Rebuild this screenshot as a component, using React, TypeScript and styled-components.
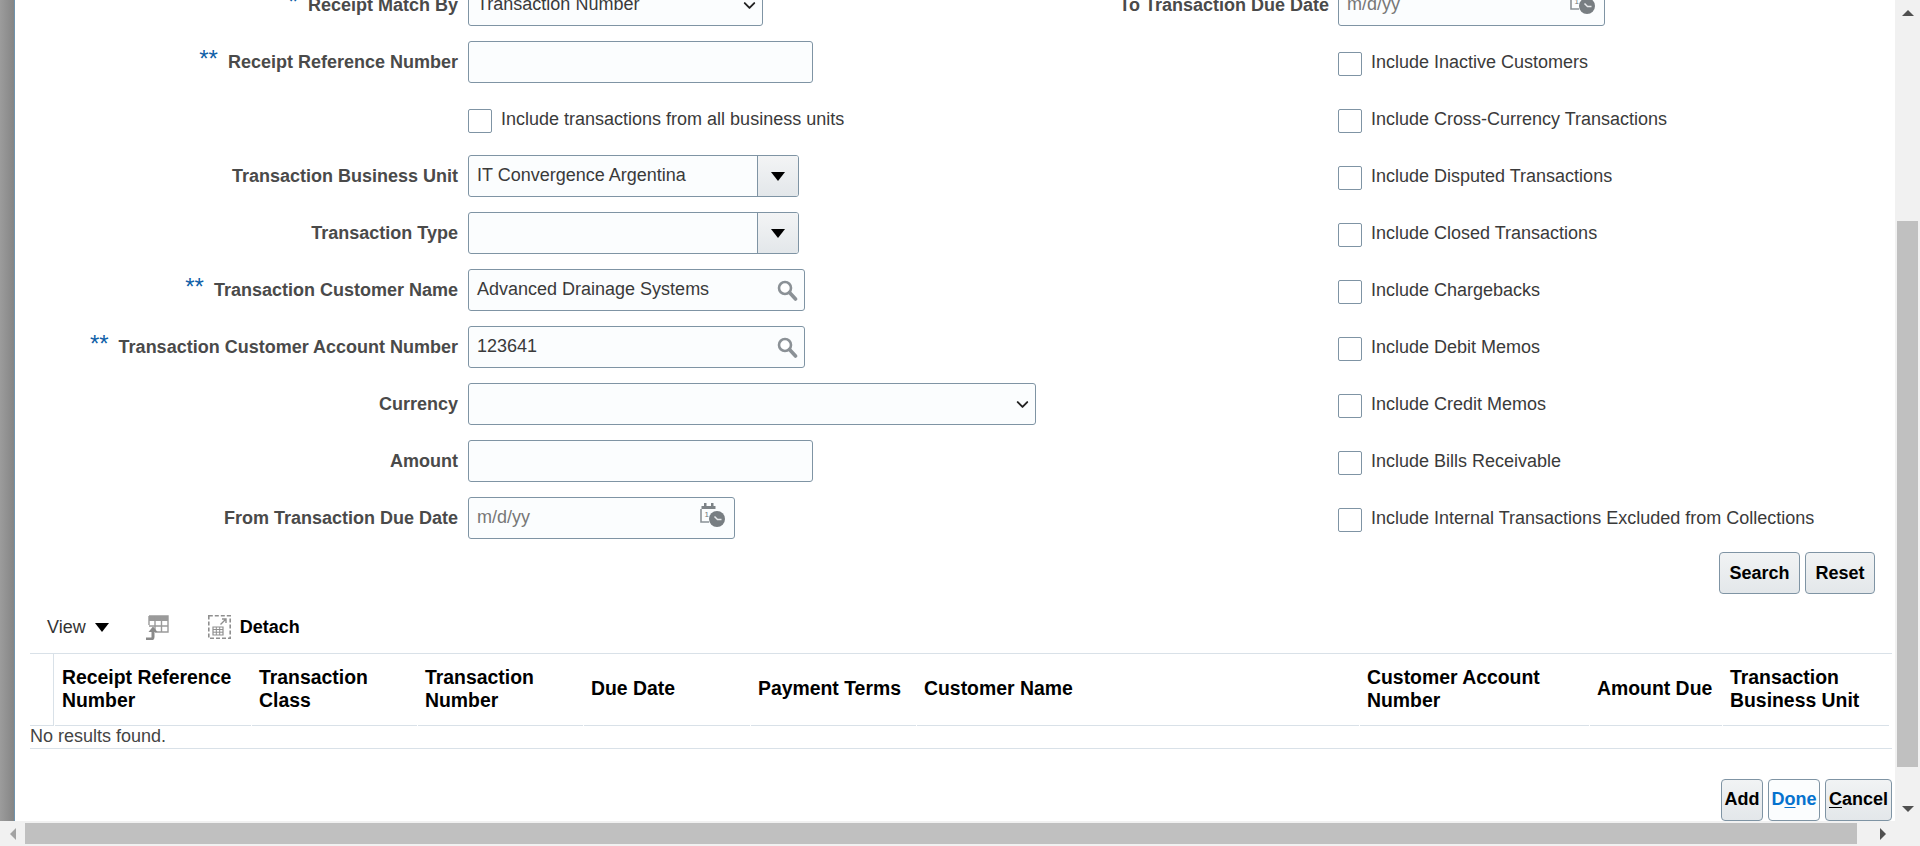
import React from 'react'
import styled, { createGlobalStyle } from 'styled-components'
import { ChevronDown } from 'lucide-react'

const GlobalStyle = createGlobalStyle`
  html, body {
    margin: 0;
    padding: 0;
    background: #fff;
    overflow: hidden;
  }
  * {
    box-sizing: border-box;
  }
`

const Viewport = styled.div`
  width: 1920px;
  height: 846px;
  display: grid;
  grid-template-columns: 1895px 25px;
  grid-template-rows: 821px 25px;
  overflow: hidden;
  font-family: "Liberation Sans", Arial, sans-serif;
  font-size: 18px;
  color: #3a3a3a;
`

const Main = styled.div`
  display: flex;
  overflow: hidden;
`

const SideStrip = styled.div`
  width: 15px;
  flex: none;
  background: linear-gradient(to right, #9c9c9c, #858585);
  border-right: 1px solid #6f93ad;
`

const Dialog = styled.div`
  flex: 1;
  min-width: 0;
  background: #fff;
`

const FormColumns = styled.div`
  display: flex;
  margin-top: -16px;
`

const FormColumn = styled.div<{ $width: number; $labelWidth: number }>`
  width: ${p => p.$width}px;
  flex: none;
  display: grid;
  grid-template-columns: ${p => p.$labelWidth}px 1fr;
  column-gap: ${p => (p.$labelWidth > 300 ? 10 : 9)}px;
  grid-auto-rows: 42px;
  row-gap: 15px;
  align-items: center;
`

const Label = styled.div`
  display: flex;
  justify-content: flex-end;
  align-items: center;
  gap: 10px;
  font-weight: 700;
  color: #4a4a4a;
  white-space: nowrap;
  grid-column: 1;
`

const Required = styled.span`
  color: #0f5fa8;
  font-size: 24px;
  font-weight: 400;
  line-height: 24px;
  margin-top: -6px;
`

const Field = styled.div<{ $width: number }>`
  grid-column: 2;
  width: ${p => p.$width}px;
  height: 42px;
  display: flex;
  align-items: center;
  justify-content: space-between;
  padding: 0 6px 2px 8px;
  background: #fbfdfe;
  border: 1px solid #7f94a4;
  border-radius: 3px;
  white-space: nowrap;
`

const Chevron = styled(ChevronDown)`
  margin: 2px -3px 0 0;
  stroke-width: 2.4;
`

const Placeholder = styled.span`
  color: #777;
`

const ComboBox = styled.div`
  grid-column: 2;
  width: 331px;
  height: 42px;
  display: flex;
  background: #fbfdfe;
  border: 1px solid #7f94a4;
  border-radius: 3px;
`

const ComboValue = styled.div`
  flex: 1;
  display: flex;
  align-items: center;
  padding: 0 0 1px 8px;
  white-space: nowrap;
`

const ComboButton = styled.div`
  width: 41px;
  flex: none;
  display: flex;
  align-items: center;
  justify-content: center;
  border-left: 1px solid #7f94a4;
  border-radius: 0 2px 2px 0;
  background: linear-gradient(to bottom, #f3f4f5, #e3e7ea);
`

const CaretDown = styled.span<{ $size?: number }>`
  display: inline-block;
  width: 0;
  height: 0;
  margin-top: 1px;
  border-left: ${p => p.$size ?? 7}px solid transparent;
  border-right: ${p => p.$size ?? 7}px solid transparent;
  border-top: ${p => (p.$size ?? 7) + 2}px solid #000;
`

const CheckRow = styled.label`
  grid-column: 2;
  display: flex;
  align-items: center;
  gap: 9px;
  white-space: nowrap;
  line-height: 22px;
  height: 24px;
  margin-top: -1px;
`

const CheckBox = styled.span`
  width: 24px;
  height: 24px;
  flex: none;
  margin-top: 4px;
  background: #fff;
  border: 1px solid #7f94a4;
  border-radius: 2px;
`

const SearchBar = styled.div`
  display: flex;
  justify-content: flex-end;
  gap: 5px;
  margin-top: 13px;
  padding-right: 20px;
  button {
    padding-bottom: 0;
  }
`

const Button = styled.button<{ $width: number; $primary?: boolean }>`
  width: ${p => p.$width}px;
  height: 42px;
  padding: 0 0 2px;
  font-family: inherit;
  font-size: 18px;
  font-weight: 700;
  color: ${p => (p.$primary ? '#0572ce' : '#000')};
  background: ${p => (p.$primary ? '#fbfdfe' : 'linear-gradient(to bottom, #f1f3f4, #e3e7ea)')};
  border: 1px solid #7f94a4;
  border-radius: 4px;
  white-space: nowrap;
  u {
    text-underline-offset: 2px;
  }
`

const Toolbar = styled.div`
  height: 59px;
  display: flex;
  align-items: center;
  padding: 7px 0 0 32px;
  color: #333;
`

const ViewMenu = styled.div`
  display: flex;
  align-items: center;
  gap: 9px;
  margin-right: 36px;
`

const ToolIcon = styled.svg`
  display: block;
  flex: none;
`

const LookupIcon = styled(ToolIcon)`
  margin-top: 2px;
`

const DateIcon = styled(ToolIcon)`
  margin: -6px 3px 0 0;
`

const DetachButton = styled.div`
  display: flex;
  align-items: center;
  gap: 9px;
  margin-left: 39px;
  font-weight: 700;
  color: #000;
`

const TableFrame = styled.div`
  margin: 0 3px 0 15px;
  border-top: 1px solid #d9e1e8;
  border-bottom: 1px solid #d9e1e8;
`

const HeaderRow = styled.div`
  display: grid;
  grid-template-columns: 24px 197px 166px 166px 167px 166px 443px 230px 133px 167px;
  height: 72px;
`

const Corner = styled.div`
  border-right: 1px solid #d9e1e8;
  border-bottom: 1px solid #d9e1e8;
`

const HeaderCell = styled.div`
  display: flex;
  align-items: center;
  padding: 0 0 2px 7px;
  font-size: 19.4px;
  line-height: 23px;
  font-weight: 700;
  color: #000;
  border-bottom: 1px solid #d9e1e8;
  margin-left: 1px;
`

const EmptyRow = styled.div`
  height: 22px;
  line-height: 20px;
  color: #444;
`

const Footer = styled.div`
  display: flex;
  justify-content: flex-end;
  gap: 5px;
  margin-top: 30px;
  padding-right: 3px;
`

const VerticalBar = styled.div`
  background: #f1f1f1;
  display: flex;
  flex-direction: column;
  align-items: center;
`

const ArrowSlot = styled.div`
  height: 25px;
  width: 25px;
  flex: none;
  display: flex;
  align-items: center;
  justify-content: center;
`

const ArrowUp = styled.span`
  width: 0;
  height: 0;
  border-left: 6px solid transparent;
  border-right: 6px solid transparent;
  border-bottom: 6px solid #505050;
`

const ArrowDown = styled.span`
  width: 0;
  height: 0;
  border-left: 6px solid transparent;
  border-right: 6px solid transparent;
  border-top: 6px solid #505050;
`

const ArrowLeft = styled.span`
  width: 0;
  height: 0;
  border-top: 6px solid transparent;
  border-bottom: 6px solid transparent;
  border-right: 6px solid #a3a3a3;
`

const ArrowRight = styled.span`
  width: 0;
  height: 0;
  border-top: 6px solid transparent;
  border-bottom: 6px solid transparent;
  border-left: 6px solid #505050;
`

const VerticalThumb = styled.div`
  width: 21px;
  height: 546px;
  margin-top: 196px;
  margin-bottom: 29px;
  background: #c0c0c0;
`

const HorizontalBar = styled.div`
  background: #f1f1f1;
  display: flex;
  align-items: center;
`

const HorizontalThumb = styled.div`
  width: 1832px;
  height: 21px;
  background: #c0c0c0;
  margin-right: 13px;
`

const ScrollCorner = styled.div`
  background: #f1f1f1;
`

const SearchIcon = () => (
  <LookupIcon width="21" height="21" viewBox="0 0 21 21">
    <circle cx="8" cy="8" r="6" fill="#fff" stroke="#8b9196" strokeWidth="2.6" />
    <path d="M12.5 12.5 L18.5 19" stroke="#8b9196" strokeWidth="3.6" strokeLinecap="round" />
  </LookupIcon>
)

const CalendarIcon = () => (
  <DateIcon width="25" height="25" viewBox="0 0 25 25">
    <path d="M1.5 4h14v3h-14z" fill="#7d8387" />
    <path d="M4 1h2.5v4H4zM11 1h2.5v4H11z" fill="#7d8387" />
    <path d="M1 7v13h8" fill="none" stroke="#8b9196" strokeWidth="1.6" />
    <text x="4.5" y="15" fontSize="8" fontFamily="Liberation Sans" fill="#6f7478">1</text>
    <circle cx="17" cy="17" r="8" fill="#787e82" />
    <path d="M14.500 14.500 L17.500 17.500 L21.500 17.500" fill="none" stroke="#e8eaec" strokeWidth="1.5" />
  </DateIcon>
)

const FreezeIcon = () => (
  <ToolIcon width="24" height="25" viewBox="0 0 24 25">
    <path d="M4 1h19v16H10" fill="none" stroke="#9a9a9a" strokeWidth="1.4" />
    <path d="M4 1h19v5H4z" fill="#9a9a9a" />
    <path d="M4 11h19M10 1v16M16.500 1v16M4 1v9" fill="none" stroke="#9a9a9a" strokeWidth="1.4" />
    <path d="M1 24h5c1.500 0 2-1 2-2v-5" fill="none" stroke="#8a8a8a" strokeWidth="3" />
    <path d="M3.500 17 L8 11.500 L12.500 17z" fill="#8a8a8a" />
  </ToolIcon>
)

const DetachIcon = () => (
  <ToolIcon width="23" height="24" viewBox="0 0 23 24">
    <rect x="0.800" y="0.800" width="21.400" height="22.400" fill="none" stroke="#8f8f8f" strokeWidth="1.600" strokeDasharray="4 2" />
    <path d="M5 12h10v8H5z" fill="none" stroke="#8f8f8f" strokeWidth="1.200" />
    <path d="M5 14.500h10M5 17.200h10M8.300 12v8M11.700 12v8" stroke="#8f8f8f" strokeWidth="1" />
    <path d="M12.500 9.500 L18 4M14 4h4v4" fill="none" stroke="#8f8f8f" strokeWidth="1.400" />
  </ToolIcon>
)

const columns = [
  'Receipt Reference Number',
  'Transaction Class',
  'Transaction Number',
  'Due Date',
  'Payment Terms',
  'Customer Name',
  'Customer Account Number',
  'Amount Due',
  'Transaction Business Unit',
]

const includes = [
  'Include Inactive Customers',
  'Include Cross-Currency Transactions',
  'Include Disputed Transactions',
  'Include Closed Transactions',
  'Include Chargebacks',
  'Include Debit Memos',
  'Include Credit Memos',
  'Include Bills Receivable',
  'Include Internal Transactions Excluded from Collections',
]

export default function App() {
  return (
    <Viewport>
      <GlobalStyle />
      <Main>
        <SideStrip />
        <Dialog>
          <FormColumns>
            <FormColumn $width={1100} $labelWidth={443}>
              <Label><Required>*</Required>Receipt Match By</Label>
              <Field $width={295}>
                Transaction Number
                <Chevron size={19} color="#222" />
              </Field>

              <Label><Required>**</Required>Receipt Reference Number</Label>
              <Field $width={345} />

              <CheckRow>
                <CheckBox />
                Include transactions from all business units
              </CheckRow>

              <Label>Transaction Business Unit</Label>
              <ComboBox>
                <ComboValue>IT Convergence Argentina</ComboValue>
                <ComboButton><CaretDown /></ComboButton>
              </ComboBox>

              <Label>Transaction Type</Label>
              <ComboBox>
                <ComboValue />
                <ComboButton><CaretDown /></ComboButton>
              </ComboBox>

              <Label><Required>**</Required>Transaction Customer Name</Label>
              <Field $width={337}>
                Advanced Drainage Systems
                <SearchIcon />
              </Field>

              <Label><Required>**</Required>Transaction Customer Account Number</Label>
              <Field $width={337}>
                123641
                <SearchIcon />
              </Field>

              <Label>Currency</Label>
              <Field $width={568}>
                <span />
                <Chevron size={19} color="#222" />
              </Field>

              <Label>Amount</Label>
              <Field $width={345} />

              <Label>From Transaction Due Date</Label>
              <Field $width={267}>
                <Placeholder>m/d/yy</Placeholder>
                <CalendarIcon />
              </Field>
            </FormColumn>

            <FormColumn $width={780} $labelWidth={214}>
              <Label>To Transaction Due Date</Label>
              <Field $width={267}>
                <Placeholder>m/d/yy</Placeholder>
                <CalendarIcon />
              </Field>
              {includes.map(text => (
                <CheckRow key={text}>
                  <CheckBox />
                  {text}
                </CheckRow>
              ))}
            </FormColumn>
          </FormColumns>

          <SearchBar>
            <Button $width={81}>Search</Button>
            <Button $width={70}>Reset</Button>
          </SearchBar>

          <Toolbar>
            <ViewMenu>
              View
              <CaretDown $size={7} />
            </ViewMenu>
            <FreezeIcon />
            <DetachButton>
              <DetachIcon />
              Detach
            </DetachButton>
          </Toolbar>

          <TableFrame>
            <HeaderRow>
              <Corner />
              {columns.map(c => (
                <HeaderCell key={c}><span>{c}</span></HeaderCell>
              ))}
            </HeaderRow>
            <EmptyRow>No results found.</EmptyRow>
          </TableFrame>

          <Footer>
            <Button $width={42}>Add</Button>
            <Button $width={52} $primary>D<u>o</u>ne</Button>
            <Button $width={67}><u>C</u>ancel</Button>
          </Footer>
        </Dialog>
      </Main>

      <VerticalBar>
        <ArrowSlot><ArrowUp /></ArrowSlot>
        <VerticalThumb />
        <ArrowSlot><ArrowDown /></ArrowSlot>
      </VerticalBar>

      <HorizontalBar>
        <ArrowSlot><ArrowLeft /></ArrowSlot>
        <HorizontalThumb />
        <ArrowSlot><ArrowRight /></ArrowSlot>
      </HorizontalBar>
      <ScrollCorner />
    </Viewport>
  )
}
